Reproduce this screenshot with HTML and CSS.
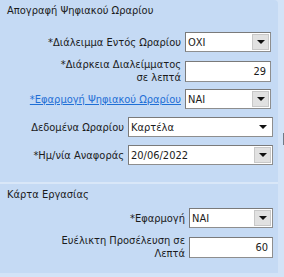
FILE: index.html
```
<!DOCTYPE html>
<html lang="el">
<head>
   <meta charset="UTF-8">
   <title>Απογραφή Ψηφιακού Ωραρίου</title>
   <link rel="stylesheet" href="styles.css">
</head>
<body>
<div class="panel">
   <div class="section">
      <div class="title">Απογραφή Ψηφιακού Ωραρίου</div>

      <div class="row row-first">
         <div class="label wide">*Διάλειμμα Εντός Ωραρίου</div>
         <div class="combo small"><span class="value">ΟΧΙ</span><span class="btn"><i class="tri"></i></span></div>
      </div>

      <div class="row row-two">
         <div class="label wide">*Διάρκεια Διαλείμματος<br>σε λεπτά</div>
         <div class="field small">29</div>
      </div>

      <div class="row row-link">
         <div class="label wide"><a href="#">*Εφαρμογή Ψηφιακού Ωραρίου</a></div>
         <div class="combo small"><span class="value">ΝΑΙ</span><span class="btn"><i class="tri"></i></span></div>
      </div>

      <div class="row row-data">
         <div class="label narrow">Δεδομένα Ωραρίου</div>
         <div class="combo large"><span class="value">Καρτέλα</span><span class="btn flat"><i class="tri"></i></span></div>
      </div>

      <div class="row row-date">
         <div class="label narrow">*Ημ/νία Αναφοράς</div>
         <div class="combo large"><span class="value">20/06/2022</span><span class="btn"><i class="tri"></i></span></div>
      </div>
   </div>

   <div class="divider"></div>

   <div class="section">
      <div class="title">Κάρτα Εργασίας</div>

      <div class="row row-card">
         <div class="label card">*Εφαρμογή</div>
         <div class="combo medium"><span class="value">ΝΑΙ</span><span class="btn"><i class="tri"></i></span></div>
      </div>

      <div class="row row-late">
         <div class="label card">Ευέλικτη Προσέλευση σε<br>Λεπτά</div>
         <div class="field medium">60</div>
      </div>
   </div>
</div>
<div class="edge-mark"></div>
</body>
</html>
```

FILE: styles.css
```
body {
   margin: 0;
   padding: 0;
   width: 284px;
   height: 277px;
   overflow: hidden;
   position: relative;
   background: #d3e3f7;
   font: 11px "DejaVu Sans Condensed", "DejaVu Sans", sans-serif;
   color: #1b1b1b;
}

.panel {
   width: 278px;
   height: 273px;
   background: #c5daf4;
   border-top-right-radius: 4px;
}

.section {
   padding-left: 7px;
}

.title {
   padding-top: 4px;
   line-height: 14px;
}

.row {
   display: flex;
   align-items: center;
}

.label {
   text-align: right;
   line-height: 13px;
   padding-right: 4px;
   box-sizing: border-box;
}

.label.wide {
   width: 178px;
}

.label.narrow {
   width: 121px;
}

.label.card {
   width: 182px;
}

a,
a:visited {
   color: #1f6fd6;
   text-decoration: underline;
}

.row-first {
   margin-top: 14px;
}

.row-two {
   margin-top: 6px;
}

.row-link {
   margin-top: 5px;
}

.row-data {
   margin-top: 8px;
}

.row-date {
   margin-top: 8px;
}

.divider {
   height: 2px;
   margin-top: 17px;
   background: #d9e7f8;
}

.row-card {
   margin-top: 6px;
}

.row-late {
   margin-top: 6px;
}

.combo,
.field {
   display: flex;
   align-items: center;
   box-sizing: border-box;
   height: 20px;
   background: #fff;
   border: 1px solid #7a7a7a;
   border-right-color: #8e8e8e;
   border-bottom-color: #8e8e8e;
}

.small {
   width: 86px;
}

.medium {
   width: 84px;
}

.large {
   width: 145px;
}

.field {
   justify-content: flex-end;
   padding-right: 4px;
   height: 21px;
}

.value {
   flex: 1;
   padding-left: 2px;
}

.btn {
   display: flex;
   align-items: center;
   justify-content: center;
   width: 17px;
   height: 16px;
   margin-right: 1px;
   background: #e1e1e1;
   border: 1px solid #c8c8c8;
   box-sizing: border-box;
}

.btn.flat {
   background: none;
   border-color: transparent;
}

.tri {
   width: 0;
   height: 0;
   border-left: 4px solid transparent;
   border-right: 4px solid transparent;
   border-top: 4px solid #111;
}

.edge-mark {
   position: absolute;
   left: 283px;
   top: 133px;
   width: 1px;
   height: 12px;
   background: #6f7b88;
}
```
